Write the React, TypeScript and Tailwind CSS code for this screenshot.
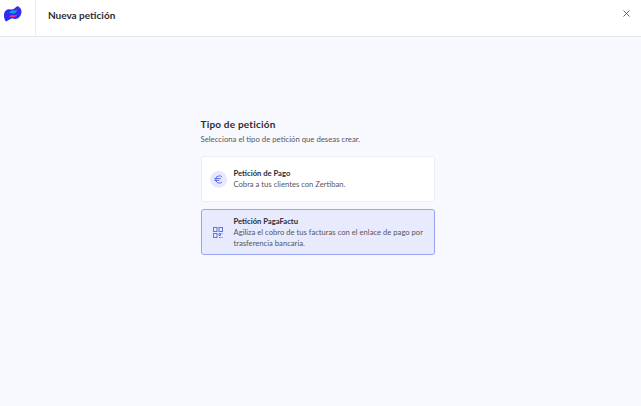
import { Euro, X } from "lucide-react";

function Logo() {
  return (
    <svg width="18" height="16" viewBox="0 0 18 16">
      <defs>
        <linearGradient id="logo-a" x1="0" y1="1" x2="1" y2="0">
          <stop offset="0" stopColor="#2a2cf2" />
          <stop offset="0.7" stopColor="#2f2cf0" />
          <stop offset="1" stopColor="#6a24e0" />
        </linearGradient>
      </defs>
      <path d="M0 8 C0.5 5 3 3 5.5 3.2 C7.5 3.4 8.5 4 10 2.8 C11 2 12 0.8 13.5 0 C16 1 17.5 3 17.5 5.5 C17.5 9.5 14.5 13 11.5 13 C9.5 13 8.5 12 7 12.8 C5 13.8 3.5 15 2 15.5 C0.5 14 -0.3 11 0 8 Z" fill="url(#logo-a)" />
      <path d="M5 6.5 C6.5 4.8 8.5 4.6 10.5 4.6 C11.5 4.6 12.5 4.2 13 3.5 C13 6 11.5 7.5 9 7.5 C7.5 7.5 6.2 7.2 5 6.5 Z" fill="#18a0d8" />
      <path d="M5 11.2 C6.5 9 8.5 8.8 10 9.2 C11.5 9.6 12.5 9 13.5 8 C12.8 10.6 10.5 11.6 8.5 11.2 C7.2 11 6 11 5 11.2 Z" fill="#e0349a" />
    </svg>
  );
}

function QrIcon() {
  return (
    <svg width="10" height="11" viewBox="0 0 10 11" fill="none" stroke="#5f70f2" strokeWidth="1">
      <rect x="0.5" y="0.5" width="3.5" height="4" />
      <rect x="6" y="0.5" width="3.5" height="4" />
      <rect x="0.5" y="6.5" width="3.5" height="4" />
      <path d="M6 6.5h1.5v2H6zM8.5 6.5h1M8.5 10.5h1M6 10.5h1.5" />
    </svg>
  );
}

export default function App() {
  return (
    <div className="flex h-[406px] w-[641px] flex-col bg-[#f8f9ff] font-['Lato',sans-serif] text-[#2d2d33]">
      <header className="flex h-[37px] items-center border-b border-[#e8e8ec] bg-white">
        <div className="flex h-full w-[36px] items-center justify-center border-r border-[#ececf0] pb-[8px] pr-[9px]">
          <Logo />
        </div>
        <h1 className="mb-[5px] ml-3 text-[10px] font-bold">Nueva petición</h1>
        <X className="mb-[10px] ml-auto mr-[9px] h-[11px] w-[11px] text-[#55555c]" />
      </header>

      <main className="flex justify-center pr-[6px] pt-[80px]">
        <div className="w-[234px]">
          <h2 className="text-[10px] font-bold leading-[14px] tracking-[0.2px]">Tipo de petición</h2>
          <p className="mt-[3px] text-[7.75px] leading-[11px] text-[#55555c]">
            Selecciona el tipo de petición que deseas crear.
          </p>

          <div className="mt-[11px] flex h-[46px] items-center rounded-[3px] border border-[#eeeef3] bg-white pl-[8px]">
            <span className="flex h-[17px] w-[17px] items-center justify-center rounded-full bg-[#e6e9fd]">
              <Euro className="h-[11px] w-[11px] text-[#4f61ee]" strokeWidth={2} />
            </span>
            <div className="ml-[7px]">
              <p className="text-[7.65px] font-bold leading-[11px]">Petición de Pago</p>
              <p className="text-[7.65px] leading-[11px] text-[#55555c]">Cobra a tus clientes con Zertiban.</p>
            </div>
          </div>

          <div className="mt-[7px] flex h-[46px] items-center rounded-[3px] border border-[#99a3f5] bg-[#e8eafd] pl-[11px]">
            <QrIcon />
            <div className="ml-[11px] w-[196px]">
              <p className="text-[7.65px] font-bold leading-[11px]">Petición PagaFactu</p>
              <p className="text-[7.65px] leading-[11px] text-[#55555c]">
                Agiliza el cobro de tus facturas con el enlace de pago por trasferencia bancaria.
              </p>
            </div>
          </div>
        </div>
      </main>
    </div>
  );
}
